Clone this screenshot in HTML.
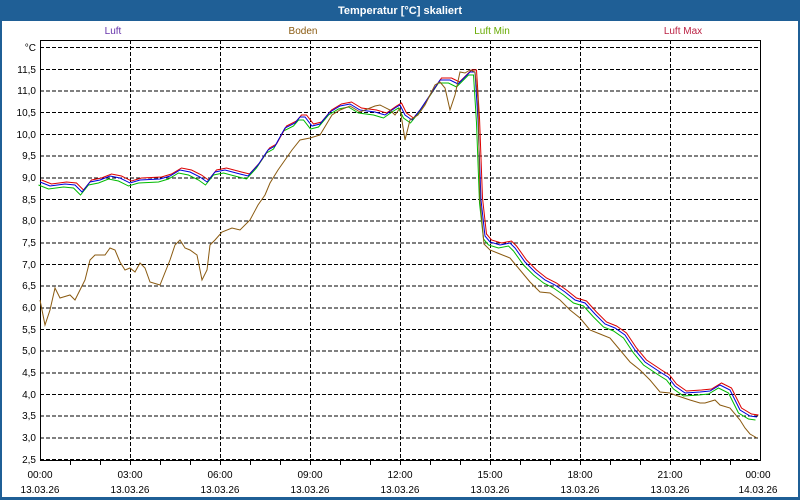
<!DOCTYPE html>
<html><head><meta charset="utf-8"><style>
body{margin:0;width:800px;height:500px;overflow:hidden;background:#1f5f96;font-family:"Liberation Sans",sans-serif}
</style></head><body>
<svg width="800" height="500" xmlns="http://www.w3.org/2000/svg" style="position:absolute;left:0;top:0" font-family="Liberation Sans, sans-serif">
<rect x="0" y="0" width="800" height="500" fill="#1f5f96"/>
<rect x="2" y="21" width="796" height="476" fill="#fff"/>
<text x="400" y="14" fill="#fff" font-size="11" font-weight="bold" text-anchor="middle">Temperatur [°C] skaliert</text>
<g font-size="10" text-anchor="middle">
<text x="113" y="34" fill="#6633aa">Luft</text>
<text x="303" y="34" fill="#8a5a10">Boden</text>
<text x="492" y="34" fill="#66aa00">Luft Min</text>
<text x="683" y="34" fill="#bb2244">Luft Max</text>
</g>
<g stroke="#000" stroke-width="1" stroke-dasharray="4,2" fill="none">
<path d="M40 47.5H760M40 69.5H760M40 91H760M40 112.5H760M40 134.5H760M40 156H760M40 178H760M40 199.5H760M40 221H760M40 243H760M40 264.5H760M40 286H760M40 308H760M40 329.5H760M40 351H760M40 373H760M40 394.5H760M40 416H760M40 438H760M40 459.5H760"/>
<path d="M130.5 40V460M220.5 40V460M310.5 40V460M400.5 40V460M490.5 40V460M580.5 40V460M670.5 40V460"/>
</g>
<g stroke="#000" stroke-width="1" fill="none">
<rect x="40.5" y="40.5" width="720" height="420"/>
<path d="M70.5 461v4M100.5 461v4M130.5 461v4M160.5 461v4M190.5 461v4M220.5 461v4M250.5 461v4M280.5 461v4M310.5 461v4M340.5 461v4M370.5 461v4M400.5 461v4M430.5 461v4M460.5 461v4M490.5 461v4M520.5 461v4M550.5 461v4M580.5 461v4M610.5 461v4M640.5 461v4M670.5 461v4M700.5 461v4M730.5 461v4"/>
</g>
<g font-size="10" fill="#000" text-anchor="end">
<text x="36" y="51">°C</text>
<text x="36" y="73">11,5</text><text x="36" y="94">11,0</text><text x="36" y="116">10,5</text><text x="36" y="138">10,0</text>
<text x="36" y="159">9,5</text><text x="36" y="181">9,0</text><text x="36" y="203">8,5</text><text x="36" y="224">8,0</text>
<text x="36" y="246">7,5</text><text x="36" y="268">7,0</text><text x="36" y="289">6,5</text><text x="36" y="311">6,0</text>
<text x="36" y="333">5,5</text><text x="36" y="354">5,0</text><text x="36" y="376">4,5</text><text x="36" y="398">4,0</text>
<text x="36" y="419">3,5</text><text x="36" y="441">3,0</text><text x="36" y="463">2,5</text>
</g>
<g font-size="10" fill="#000" text-anchor="middle">
<text x="40" y="478">00:00</text><text x="40" y="493">13.03.26</text>
<text x="130" y="478">03:00</text><text x="130" y="493">13.03.26</text>
<text x="220" y="478">06:00</text><text x="220" y="493">13.03.26</text>
<text x="310" y="478">09:00</text><text x="310" y="493">13.03.26</text>
<text x="400" y="478">12:00</text><text x="400" y="493">13.03.26</text>
<text x="490" y="478">15:00</text><text x="490" y="493">13.03.26</text>
<text x="580" y="478">18:00</text><text x="580" y="493">13.03.26</text>
<text x="670" y="478">21:00</text><text x="670" y="493">13.03.26</text>
<text x="758" y="478">00:00</text><text x="758" y="493">14.03.26</text>
</g>
<defs>
<polyline id="luft" fill="none" stroke-width="1" points="40,182 50,186 65,184 75,185 82,192 90,182 100,180 110,176 120,178 130,183 140,180 160,179 170,176 180,170 190,172 200,177 207,182 215,172 225,170 240,174 248,176 258,165 268,150 275,146 285,128 295,123 300,117 305,117 312,126 320,124 330,112 340,106 350,104 360,110 375,112 385,115 395,108 400,105 405,115 412,120 420,110 430,95 440,80 450,80 458,84 462,80 470,72 475,72 478,120 481,200 485,236 490,242 500,245 510,243 515,248 525,262 535,272 545,280 555,285 565,292 575,300 585,303 595,314 605,324 615,328 625,335 635,350 645,362 660,372 668,377 675,386 685,393 700,392 710,391 720,385 730,390 740,410 750,416 757,417"/>
</defs>
<use href="#luft" stroke="#00bb00" transform="translate(-1.5,3)"/>
<use href="#luft" stroke="#dd0000" transform="translate(1.5,-2)"/>
<use href="#luft" stroke="#0000dd"/>
<polyline fill="none" stroke="#8a5a10" stroke-width="1" points="40,300 45,325 50,310 55,288 60,298 70,295 75,300 80,290 85,280 90,260 95,255 105,255 110,248 115,250 120,262 125,270 130,268 135,272 140,263 145,268 150,282 160,285 170,260 175,245 180,240 185,248 190,250 197,255 202,280 207,270 210,245 215,240 222,232 232,228 240,230 250,220 258,205 265,195 270,183 278,170 285,160 292,150 300,140 310,138 320,135 326,125 332,115 340,110 350,106 360,112 370,108 375,106 380,105 390,110 395,115 400,108 405,140 410,120 418,115 425,105 435,85 440,82 445,88 450,110 455,95 460,72 465,73 470,70 475,72 478,100 480,200 484,244 490,250 500,254 510,258 520,270 530,282 540,292 550,293 560,300 570,310 580,318 590,330 600,334 610,338 620,350 630,362 640,370 650,380 660,392 670,393 675,395 690,400 700,403 705,403 715,400 720,405 730,408 740,420 745,428 750,434 757,438"/>
</svg>
</body></html>
